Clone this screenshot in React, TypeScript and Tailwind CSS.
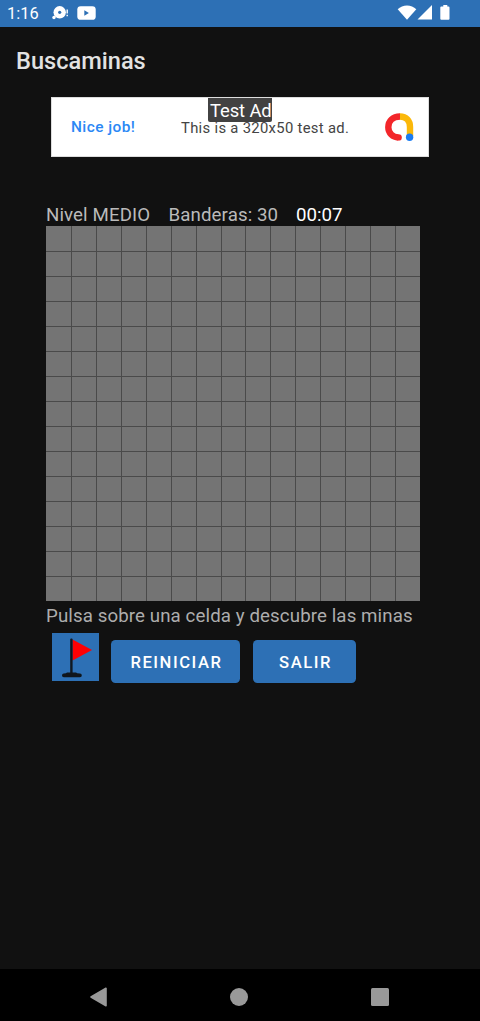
import React from 'react';

const CELLS = Array.from({ length: 225 }, (_, i) => i);

function StatusBar() {
  return (
    <header className="flex h-[27px] shrink-0 items-center bg-[#2d70b5] pl-[7px] text-white">
      <span className="w-[45px] text-[16.4px] leading-[27px] whitespace-nowrap">1:16</span>
      <svg className="-mt-px h-[16px] w-[17px]" viewBox="0 0 17 16">
        <circle cx="7.7" cy="7.3" r="6.2" fill="#fff" />
        <circle cx="2" cy="12.5" r="1.7" fill="#fff" />
        <circle cx="7.7" cy="7.3" r="1.6" fill="#2d70b5" />
        <path d="M15.2 4.5v4M15.2 9.8v1.4" stroke="#fff" strokeWidth="1.4" />
      </svg>
      <svg className="-mt-px ml-[8px] h-[14px] w-[19px]" viewBox="0 0 19 14">
        <rect x="0.3" y="0.2" width="18.4" height="13.6" rx="3.4" fill="#fff" />
        <path d="M7.3 4.3v5.4l4.6-2.7z" fill="#2d70b5" />
      </svg>
      <svg className="-mt-px mr-[27px] ml-auto h-[18px] w-[56px]" viewBox="0 0 56 18">
        <path d="M0.7 5.2C5.5 0.1 14.5 0.1 19.3 5.2L10 15.8z" fill="#fff" />
        <path d="M20.5 15.6H35V1.1z" fill="#fff" />
        <path d="M46.3 1h4v1.4h1.2q1 0 1 1v11.4q0 1-1 1h-7.2q-1 0-1-1V3.4q0-1 1-1h2z" fill="#fff" />
      </svg>
    </header>
  );
}

function AdBanner() {
  return (
    <div className="relative ml-[51px] flex h-[60px] w-[378px] shrink-0 items-center border border-[#ddd] bg-white">
      <span className="mt-[2px] ml-[19px] w-[110px] text-[15.4px] font-medium tracking-[0.45px] whitespace-nowrap text-[#2b88f5]">Nice job!</span>
      <span className="mt-[2px] text-[14.8px] tracking-[0.32px] whitespace-nowrap text-[#444]">This is a 320x50 test ad.</span>
      <svg className="mr-[14px] ml-auto h-[30px] w-[30px]" viewBox="0 0 30 30" fill="none">
        <path d="M15.8 4.5C22.5 4.5 26 9 26 15v9" stroke="#fbb80a" strokeWidth="6.4" />
        <path d="M16 4.5C8.8 4.5 4.3 9.1 4.3 15.3c0 5.8 4.5 10.1 10 10.1" stroke="#f3262a" strokeWidth="6.4" />
        <circle cx="14.6" cy="25.4" r="3.2" fill="#f3262a" />
        <circle cx="25.6" cy="25.3" r="3.7" fill="#1b7cf2" />
      </svg>
      <div className="absolute top-0 left-[156px] h-[24px] w-[64px] rounded-b-[2px] bg-[#424242] pl-[2px] text-[18.4px] leading-[26px] tracking-[-0.1px] whitespace-nowrap text-white">
        Test Ad
      </div>
    </div>
  );
}

function FlagIcon() {
  return (
    <svg className="h-[48px] w-[48px]" viewBox="0 0 48 48">
      <path d="M20.5 6.5L40 17L20.5 27.5z" fill="#ff0004" />
      <rect x="18.2" y="5.5" width="2.4" height="36" rx="1" fill="#101820" />
      <path d="M15 39.4h9q0.5 1 4 1.2a1.8 1.8 0 0 1 0 3.6H11.8a1.8 1.8 0 0 1 0-3.6Q14.5 40.4 15 39.4z" fill="#10161c" />
    </svg>
  );
}

function Board() {
  return (
    <div className="grid h-[375px] w-[374px] shrink-0 grid-cols-15 grid-rows-15 bg-[#747474]">
      {CELLS.map((i) => (
        <div
          key={i}
          className={`${i % 15 > 0 ? 'border-l' : ''} ${i >= 15 ? 'border-t' : ''} border-[#4a4a4a]`}
        />
      ))}
    </div>
  );
}

function NavBar() {
  return (
    <nav className="flex h-[52px] shrink-0 items-center justify-between bg-black pt-[3px] pr-[91px] pl-[89px]">
      <svg className="h-[22px] w-[18px]" viewBox="0 0 18 22">
        <path d="M2 11L17 2.3v17.4z" fill="#999" stroke="#999" strokeWidth="1.6" strokeLinejoin="round" />
      </svg>
      <span className="h-[18px] w-[18px] rounded-full bg-[#999]" />
      <span className="h-[18px] w-[18px] rounded-[1.5px] bg-[#999]" />
    </nav>
  );
}

export default function App() {
  return (
    <div className="flex h-[1021px] w-[480px] flex-col overflow-hidden bg-[#111] font-['Roboto',sans-serif]">
      <StatusBar />
      <h1 className="flex h-[70px] shrink-0 items-center pl-[16px] text-[23.6px] font-medium text-[#e2e2e2]">Buscaminas</h1>
      <AdBanner />
      <main className="flex flex-1 flex-col pt-[47px] pl-[46px]">
        <div className="flex h-[22px] shrink-0 text-[18.7px] leading-[22px] tracking-[0.1px] whitespace-nowrap text-[#bababa]">
          <span className="w-[122.5px]">Nivel MEDIO</span>
          <span className="w-[127.5px]">Banderas: 30</span>
          <span className="tracking-normal text-white">00:07</span>
        </div>
        <Board />
        <p className="h-[32px] shrink-0 text-[18.7px] leading-[30px] tracking-[0.1px] whitespace-nowrap text-[#adadad]">
          Pulsa sobre una celda y descubre las minas
        </p>
        <div className="flex items-start pl-[6px] text-[16.6px] font-medium tracking-[1.55px] text-white">
          <button className="h-[48px] w-[47px] overflow-hidden bg-[#2d70b5]" aria-label="Bandera">
            <FlagIcon />
          </button>
          <button className="mt-[7px] ml-[12px] h-[43px] w-[129px] rounded-[4.5px] bg-[#2d70b5] pt-[3px] pl-[2px]">REINICIAR</button>
          <button className="mt-[7px] ml-[13px] h-[43px] w-[103px] rounded-[4.5px] bg-[#2d70b5] pt-[3px] pl-[2px]">SALIR</button>
        </div>
      </main>
      <NavBar />
    </div>
  );
}
